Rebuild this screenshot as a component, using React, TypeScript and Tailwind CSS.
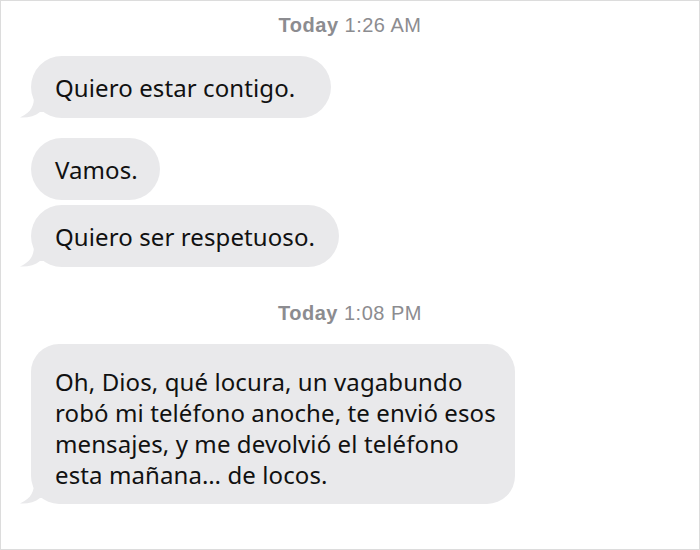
function Tail() {
  return (
    <svg
      className="absolute -left-[11px] bottom-0"
      width="26"
      height="22"
      viewBox="0 0 26 22"
      fill="#e9e9eb"
    >
      <path d="M14 0 C14 9 12 16 0 21.5 C8 22 15 20 20 16 L26 16 L26 0 Z" />
    </svg>
  );
}

function Stamp({ time }: { time: string }) {
  return (
    <div className="-ml-[30px] flex justify-center font-['Liberation_Sans',Arial,sans-serif] text-[20px] leading-[24px] tracking-[0.5px] text-[#8c8c90]">
      <span className="font-bold">Today</span>
      <span className="ml-[6px]">{time}</span>
    </div>
  );
}

function Bubble({
  children,
  tail = false,
  className = "",
}: {
  children: React.ReactNode;
  tail?: boolean;
  className?: string;
}) {
  return (
    <div
      className={
        "relative bg-[#e9e9eb] text-[#111] pl-[24px] flex items-center " +
        className
      }
    >
      {tail && <Tail />}
      <div className="relative">{children}</div>
    </div>
  );
}

export default function App() {
  return (
    <div className="h-[550px] w-[700px] border border-[#dcdcdc] bg-white pl-[30px] pt-[12px] font-['Noto_Sans','Open_Sans',sans-serif] text-[24px] leading-[31px] tracking-[0.1px]">
      <Stamp time="1:26 AM" />
      <div className="mt-[19px] flex flex-col items-start">
        <Bubble tail className="h-[62px] w-[300px] rounded-[31px]">
          Quiero estar contigo.
        </Bubble>
        <Bubble className="mt-[20px] h-[62px] w-[129px] rounded-[31px]">
          Vamos.
        </Bubble>
        <Bubble tail className="mt-[5px] h-[62px] w-[308px] rounded-[31px]">
          Quiero ser respetuoso.
        </Bubble>
      </div>
      <div className="mt-[34px]">
        <Stamp time="1:08 PM" />
      </div>
      <div className="mt-[19px] flex flex-col items-start">
        <Bubble tail className="h-[160px] w-[484px] rounded-[28px] pt-[8px]">
          Oh, Dios, qué locura, un vagabundo
          <br />
          robó mi teléfono anoche, te envió esos
          <br />
          mensajes, y me devolvió el teléfono
          <br />
          esta mañana… de locos.
        </Bubble>
      </div>
    </div>
  );
}
